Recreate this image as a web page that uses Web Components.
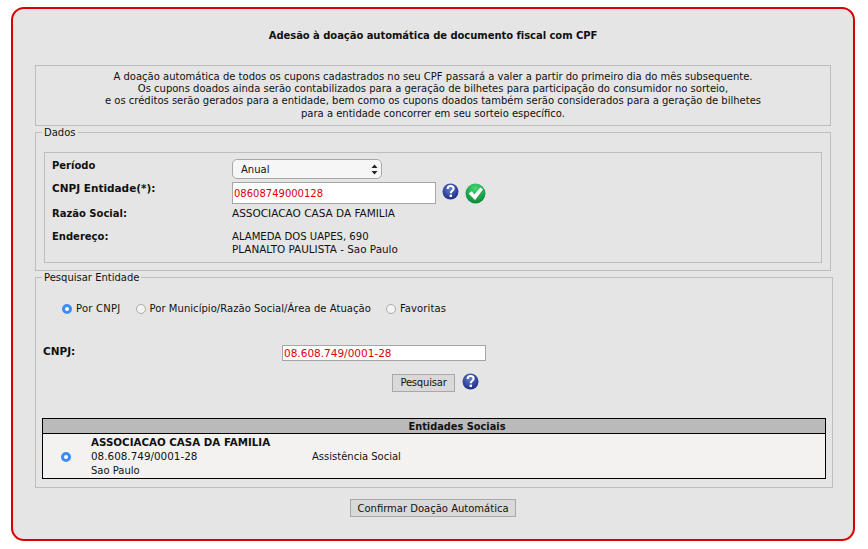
<!DOCTYPE html>
<html lang="pt-BR">
<head>
<meta charset="utf-8">
<title>Adesão à doação automática</title>
<style>
  html, body { background: #fff; }
  body { margin: 7px 13px 8px 11px; font: 10px/12px "DejaVu Sans", Verdana, sans-serif; color: #111; }
  .caps { font-size: 10.5px; line-height: 12px; }
</style>
</head>
<body>
<template id="tpl-page">
  <style>
    :host { display: block; box-sizing: border-box; width: 844px; height: 534px; background: #e5e5e5; border: 2px solid #d90000; border-radius: 13px; padding: 0 20px 0 22px; }
    h1 { margin: 0; height: 56px; padding-top: 21px; box-sizing: border-box; font-size: 10px; line-height: 12px; font-weight: bold; letter-spacing: -.05px; text-align: center; width: 796px; }
    .foot { display: flex; justify-content: center; margin-top: 11px; width: 796px; }
  </style>
  <h1><slot name="title"></slot></h1>
  <slot></slot>
  <div class="foot"><slot name="foot"></slot></div>
</template>

<template id="tpl-note">
  <style>
    :host { display: block; box-sizing: border-box; width: 796px; height: 61px; border: 1px solid #bdbdbd; padding-top: 4.7px; line-height: 12.3px; text-align: center; }
  </style>
  <slot></slot>
</template>

<template id="tpl-group">
  <style>
    :host { display: block; box-sizing: border-box; position: relative; border: 1px solid #bdbdbd; }
    .legend { position: absolute; left: 6px; top: -7px; background: #e5e5e5; padding: 0 2px; line-height: 14px; }
  </style>
  <div class="legend"><slot name="legend"></slot></div>
  <slot></slot>
</template>

<template id="tpl-dados">
  <style>
    :host { display: grid; box-sizing: border-box; width: 778px; height: 111px; margin: 19px 0 0 8px; border: 1px solid #bdbdbd; padding: 6px 0 0 7px; grid-template-columns: 180px 1fr; grid-template-rows: 23px 25px 23px auto; }
  </style>
  <slot></slot>
</template>

<template id="tpl-label">
  <style>
    :host { display: block; font-weight: bold; line-height: 14px; }
  </style>
  <slot></slot>
</template>

<template id="tpl-select">
  <style>
    :host { display: flex; box-sizing: border-box; align-items: center; justify-content: space-between; width: 150px; height: 20px; background: #f6f6f6; border: 1px solid #a8a8a8; border-radius: 5px; padding: 0 3px 0 8px; }
    span { padding-top: 2px; }
    svg { display: block; }
  </style>
  <span><slot></slot></span>
  <svg width="7" height="11" viewBox="0 0 7 11"><path d="M3.5 0.5L6.5 4H.5ZM3.5 10.5L.5 7H6.5Z" fill="#222"/></svg>
</template>

<template id="tpl-field">
  <style>
    :host { display: block; box-sizing: border-box; width: 204px; height: 22px; background: #fff; border: 1px solid #a6a6a6; padding: 0 1px; color: #d8000c; line-height: 22px; }
    :host([small]) { height: 16px; line-height: 14px; font-size: 10.5px; }
  </style>
  <slot></slot>
</template>

<template id="tpl-help">
  <style>
    :host { display: block; width: 17px; height: 17px; }
    svg { display: block; }
  </style>
  <svg width="17" height="17" viewBox="0 0 17 17">
    <defs><radialGradient id="h" cx="45%" cy="35%" r="65%"><stop offset="0" stop-color="#5f78c8"/><stop offset="1" stop-color="#1d2f86"/></radialGradient></defs>
    <circle cx="8.5" cy="8.5" r="8" fill="url(#h)"/>
    <path d="M5.6 6C5.7 4 7 3 8.6 3C10.4 3 11.6 4.1 11.6 5.7C11.6 7.8 8.8 7.8 8.8 10.2" fill="none" stroke="#fff" stroke-width="2.1"/>
    <rect x="7.6" y="11.6" width="2.4" height="2.4" fill="#fff"/>
  </svg>
</template>

<template id="tpl-ok">
  <style>
    :host { display: block; width: 21px; height: 21px; }
    svg { display: block; }
  </style>
  <svg width="21" height="21" viewBox="0 0 21 21">
    <defs><radialGradient id="g" cx="50%" cy="25%" r="75%"><stop offset="0" stop-color="#45d873"/><stop offset="1" stop-color="#058a33"/></radialGradient></defs>
    <circle cx="10.5" cy="10.5" r="10" fill="url(#g)"/>
    <path d="M3.6 10.4L6.8 8.2L9.4 11.4L15.4 4.6L18 6.4L10 17Z" fill="#4f8f5c" transform="translate(.5 .8)"/>
    <path d="M3.6 10.4L6.8 8.2L9.4 11.4L15.4 4.6L18 6.4L10 17Z" fill="#fff"/>
  </svg>
</template>

<template id="tpl-radio">
  <style>
    :host { display: inline-flex; align-items: center; gap: 4px; }
    i { display: block; box-sizing: border-box; width: 10px; height: 10px; border-radius: 50%; background: #f4f4f4; border: 1px solid #ababab; }
    :host([checked]) i { background: #fff; border: 3px solid #3b8df5; }
  </style>
  <i></i><slot></slot>
</template>

<template id="tpl-button">
  <style>
    :host { display: block; box-sizing: border-box; height: 18px; background: #d9d9d9; border: 1px solid #a8a8a8; line-height: 16px; text-align: center; }
  </style>
  <slot></slot>
</template>

<template id="tpl-entities">
  <style>
    :host { display: block; box-sizing: border-box; width: 784px; height: 61px; margin: 0 0 0 6px; border: 1px solid #000; }
    .head { height: 14px; line-height: 15px; background: #bababa; border-bottom: 1px solid #000; padding-left: 46px; text-align: center; font-weight: bold; font-size: 9.8px; }
    .row { box-sizing: border-box; height: 44px; background: #f4f1f1; display: grid; grid-template-columns: 30px 221px 1fr; padding-left: 18px; align-items: center; line-height: 14px; }
  </style>
  <div class="head"><slot name="head"></slot></div>
  <div class="row"><slot></slot></div>
</template>

<adesao-page>
  <span slot="title">Adesão à doação automática de documento fiscal com CPF</span>

  <adesao-note>
    A doação automática de todos os cupons cadastrados no seu CPF passará a valer a partir do primeiro dia do mês subsequente.<br>
    Os cupons doados ainda serão contabilizados para a geração de bilhetes para participação do consumidor no sorteio,<br>
    e os créditos serão gerados para a entidade, bem como os cupons doados também serão considerados para a geração de bilhetes<br>
    para a entidade concorrer em seu sorteio específico.
  </adesao-note>

  <adesao-group style="width:796px;height:139px;margin-top:6px">
    <span slot="legend">Dados</span>
    <adesao-dados>
      <adesao-label>Período</adesao-label>
      <adesao-select>Anual</adesao-select>
      <adesao-label class="caps">CNPJ Entidade(*):</adesao-label>
      <div style="display:flex;align-items:flex-start">
        <adesao-field>08608749000128</adesao-field>
        <adesao-help style="margin:1px 0 0 6px"></adesao-help>
        <adesao-ok style="margin:1px 0 0 6px"></adesao-ok>
      </div>
      <adesao-label>Razão Social:</adesao-label>
      <div class="caps">ASSOCIACAO CASA DA FAMILIA</div>
      <adesao-label>Endereço:</adesao-label>
      <div style="padding-top:1px"><span style="font-size:10.1px">ALAMEDA DOS UAPES, 690</span><br><span style="font-size:10.4px">PLANALTO PAULISTA - Sao Paulo</span></div>
    </adesao-dados>
  </adesao-group>

  <adesao-group style="width:798px;height:211px;margin-top:6px">
    <span slot="legend">Pesquisar Entidade</span>
    <div style="display:flex;gap:15px;margin:25px 0 0 26px">
      <adesao-radio checked style="letter-spacing:.25px">Por CNPJ</adesao-radio>
      <adesao-radio style="letter-spacing:.05px">Por Município/Razão Social/Área de Atuação</adesao-radio>
      <adesao-radio style="letter-spacing:.1px">Favoritas</adesao-radio>
    </div>
    <div style="display:flex;margin:30px 0 0 7px">
      <adesao-label class="caps" style="width:239px">CNPJ:</adesao-label>
      <adesao-field small>08.608.749/0001-28</adesao-field>
    </div>
    <div style="display:flex;margin:13px 0 0 356px;align-items:flex-start">
      <adesao-button style="width:63px;letter-spacing:-.2px">Pesquisar</adesao-button>
      <adesao-help style="margin:-1px 0 0 7px"></adesao-help>
    </div>
    <adesao-entities style="margin-top:26px">
      <span slot="head">Entidades Sociais</span>
      <adesao-radio checked style="margin-top:2px"></adesao-radio>
      <div><b style="display:block;height:14px;font-size:10.3px">ASSOCIACAO CASA DA FAMILIA</b><span style="font-size:10.4px">08.608.749/0001-28</span><br>Sao Paulo</div>
      <div style="margin-top:2px">Assistência Social</div>
    </adesao-entities>
  </adesao-group>

  <adesao-button slot="foot" style="width:166px;line-height:18px">Confirmar Doação Automática</adesao-button>
</adesao-page>

<script>
  // each tag uses the template with the same short name
  function shadowElement(tag, tplId) {
    class El extends HTMLElement {
      constructor() {
        super();
        this.attachShadow({ mode: "open" });
        const tpl = document.getElementById(tplId);
        this.shadowRoot.appendChild(tpl.content.cloneNode(true));
      }
    }
    customElements.define(tag, El);
  }
  shadowElement("adesao-page", "tpl-page");
  shadowElement("adesao-note", "tpl-note");
  shadowElement("adesao-group", "tpl-group");
  shadowElement("adesao-dados", "tpl-dados");
  shadowElement("adesao-label", "tpl-label");
  shadowElement("adesao-select", "tpl-select");
  shadowElement("adesao-field", "tpl-field");
  shadowElement("adesao-help", "tpl-help");
  shadowElement("adesao-ok", "tpl-ok");
  shadowElement("adesao-radio", "tpl-radio");
  shadowElement("adesao-button", "tpl-button");
  shadowElement("adesao-entities", "tpl-entities");
</script>
</body>
</html>
